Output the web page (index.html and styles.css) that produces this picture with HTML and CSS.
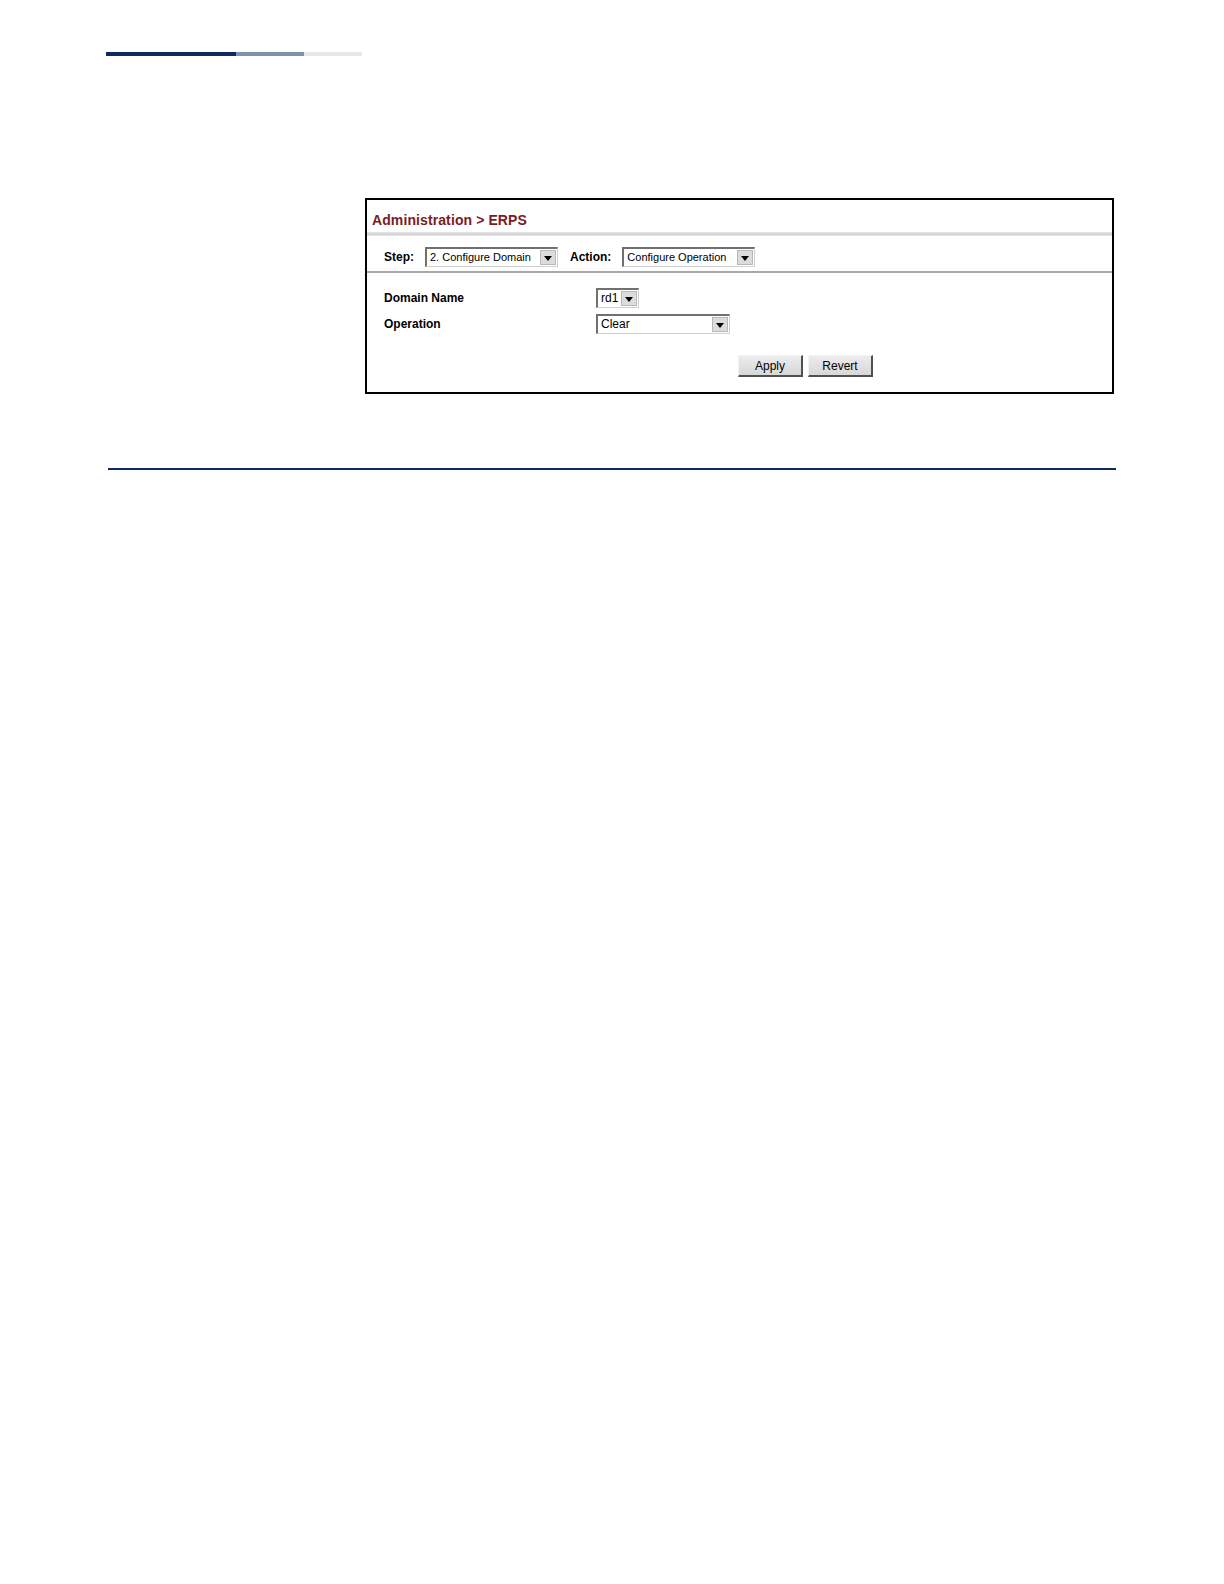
FILE: index.html
```html
<!DOCTYPE html>
<html>
<head>
<meta charset="utf-8">
<link rel="stylesheet" href="styles.css">
</head>
<body>
<div class="page">
  <div class="topbar"><span class="seg seg1"></span><span class="seg seg2"></span><span class="seg seg3"></span></div>
  <div class="frame">
    <div class="title">Administration &gt; ERPS</div>
    <div class="shade"></div>
    <div class="steprow">
      <span class="lbl">Step:</span>
      <div class="select w133"><span class="val">2. Configure Domain</span><span class="arrow"></span></div>
      <span class="lbl action">Action:</span>
      <div class="select w133"><span class="val">Configure Operation</span><span class="arrow"></span></div>
    </div>
    <div class="form">
      <div class="row">
        <span class="flabel">Domain Name</span>
        <div class="select w43 small"><span class="val">rd1</span><span class="arrow"></span></div>
      </div>
      <div class="row">
        <span class="flabel">Operation</span>
        <div class="select w134 small"><span class="val">Clear</span><span class="arrow"></span></div>
      </div>
      <div class="buttons">
        <button class="btn">Apply</button>
        <button class="btn">Revert</button>
      </div>
    </div>
  </div>
  <div class="rule"></div>
</div>
</body>
</html>
```
FILE: styles.css
```css
* { box-sizing: border-box; }
html, body { margin: 0; padding: 0; background: #fff; overflow: hidden; }
body { font-family: "Liberation Sans", Arial, sans-serif; color: #000; }
.page { width: 1224px; height: 1584px; padding-top: 52px; overflow: hidden; }
.topbar { display: flex; margin: 0 0 0 106px; height: 4px; }
.seg { display: block; height: 4px; }
.seg1 { width: 130px; background: #0c2a5e; }
.seg2 { width: 68px; background: #8190ad; }
.seg3 { width: 58px; background: #e6e7ea; }
.frame {
  margin: 142px 0 0 365px;
  width: 749px;
  height: 196px;
  border: 2px solid #000;
  display: flex;
  flex-direction: column;
}
.title {
  height: 32px;
  padding: 12px 0 0 5px;
  font-size: 14px;
  font-weight: bold;
  color: #7a1c22;
  line-height: 16px;
  letter-spacing: 0.1px;
}
.shade {
  height: 4px;
  background: linear-gradient(#ececec, #d0d0d0 50%, #e8e8e8);
}
.steprow {
  height: 37px;
  display: flex;
  align-items: center;
  padding: 7px 0 0 17px;
  border-bottom: 2px solid #a8a8a8;
}
.lbl { font-size: 12px; font-weight: bold; margin-right: 11px; }
.action { margin-left: 12px; margin-right: 11px; }
.select {
  height: 20px;
  display: flex;
  align-items: stretch;
  border-top: 2px solid #707070;
  border-left: 2px solid #707070;
  border-right: 1px solid #d0d0d0;
  border-bottom: 1px solid #d0d0d0;
  background: #fff;
}
.select .val { flex: 1; font-size: 11px; line-height: 16px; padding-left: 3px; white-space: nowrap; overflow: hidden; }
.select .arrow {
  width: 16px;
  margin: 1px;
  background: #dcdcdc;
  border: 1px solid #b8b8b8;
  position: relative;
}
.select .arrow::after {
  content: "";
  position: absolute;
  left: 3px;
  top: 5px;
  border-left: 4px solid transparent;
  border-right: 4px solid transparent;
  border-top: 5px solid #000;
}
.w133 { width: 133px; }
.w43 { width: 43px; }
.w134 { width: 134px; }
.small .val { font-size: 12px; }
.form { padding: 15px 0 0 17px; display: flex; flex-direction: column; }
.row { display: flex; align-items: center; height: 20px; margin-bottom: 6px; }
.flabel { width: 212px; font-size: 12px; font-weight: bold; }
.buttons { display: flex; gap: 5px; margin: 15px 0 0 354px; }
.btn {
  width: 65px;
  height: 22px;
  padding: 0;
  font-family: "Liberation Sans", Arial, sans-serif;
  font-size: 12px;
  color: #000;
  background: linear-gradient(#ececec, #d8d8d8);
  border-top: 1px solid #f4f4f4;
  border-left: 1px solid #f4f4f4;
  border-right: 2px solid #505050;
  border-bottom: 2px solid #505050;
}
.rule { margin: 74px 0 0 108px; width: 1008px; height: 2px; background: #0c2a5e; }
```
